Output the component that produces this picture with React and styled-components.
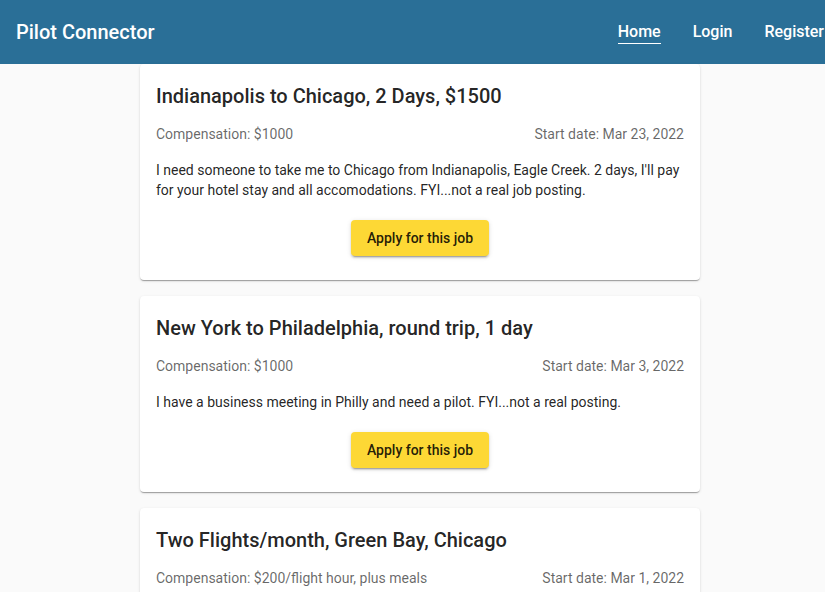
import React from 'react';
import styled, {createGlobalStyle} from 'styled-components';


/*==================== DATA ====================*/
const jobs = [
  {
    id: 1,
    title: 'Indianapolis to Chicago, 2 Days, $1500',
    compensation: '$1000',
    startDate: 'Mar 23, 2022',
    description: "I need someone to take me to Chicago from Indianapolis, Eagle Creek. 2 days, I'll pay for your hotel stay and all accomodations. FYI...not a real job posting.",
  },
  {
    id: 2,
    title: 'New York to Philadelphia, round trip, 1 day',
    compensation: '$1000',
    startDate: 'Mar 3, 2022',
    description: 'I have a business meeting in Philly and need a pilot. FYI...not a real posting.',
  },
  {
    id: 3,
    title: 'Two Flights/month, Green Bay, Chicago',
    compensation: '$200/flight hour, plus meals',
    startDate: 'Mar 1, 2022',
    description: 'Looking for a pilot to fly me between Green Bay and Chicago twice a month. FYI...not a real posting.',
  },
];


function JobCard({job}) {
  return (
    <Card>
      <JobTitle>{job.title}</JobTitle>
      <MetaRow>
        <span>Compensation: {job.compensation}</span>
        <span>Start date: {job.startDate}</span>
      </MetaRow>
      <Description>{job.description}</Description>
      <Actions>
        <ApplyButton>Apply for this job</ApplyButton>
      </Actions>
    </Card>
  );
}


function App() {
  return (
    <>
      <GlobalStyle />
      <Header>
        <Brand>Pilot Connector</Brand>
        <Nav>
          <NavLink $active>Home</NavLink>
          <NavLink>Login</NavLink>
          <NavLink>Register</NavLink>
        </Nav>
      </Header>
      <Main>
        {jobs.map(job => <JobCard key={job.id} job={job} />)}
      </Main>
    </>
  );
}


/*==================== EXPORTS ====================*/
export default App;


const GlobalStyle = createGlobalStyle`
  html, body {
    margin: 0;
    padding: 0;
    background: #fafafa;
    font-family: Roboto, "Liberation Sans", Arial, sans-serif;
    overflow: hidden;
    height: 592px;
  }
`;

const Header = styled.header`
  height: 64px;
  background: #2a6f97;
  color: #fff;
  display: flex;
  align-items: center;
  padding-left: 16px;
  width: 840px;
  box-sizing: border-box;
`;

const Brand = styled.div`
  font-size: 20px;
  font-weight: 500;
  flex: 1;
`;

const Nav = styled.nav`
  display: flex;
  gap: 32px;
  margin-right: 16px;
`;

const NavLink = styled.a`
  font-size: 16px;
  font-weight: 500;
  color: #fff;
  line-height: 20px;
  margin-top: 2px;
  padding-bottom: 1px;
  border-bottom: ${p => p.$active ? '1.5px solid #fff' : '1.5px solid transparent'};
  cursor: pointer;
`;

const Main = styled.main`
  display: flex;
  flex-direction: column;
  gap: 16px;
  width: 560px;
  margin-left: 140px;
`;

const Card = styled.div`
  background: #fff;
  border-radius: 4px;
  padding: 16px 16px 24px;
  box-shadow: 0 2px 1px -1px rgba(0,0,0,0.2), 0 1px 1px 0 rgba(0,0,0,0.14), 0 1px 3px 0 rgba(0,0,0,0.12);
`;

const JobTitle = styled.h2`
  margin: 0 0 12px;
  font-size: 20px;
  font-weight: 500;
  line-height: 32px;
  color: rgba(0,0,0,0.87);
`;

const MetaRow = styled.div`
  display: flex;
  justify-content: space-between;
  font-size: 14px;
  line-height: 20px;
  color: rgba(0,0,0,0.6);
  margin-bottom: 16px;
`;

const Description = styled.p`
  margin: 0 0 20px;
  font-size: 14px;
  line-height: 20px;
  color: rgba(0,0,0,0.87);
`;

const Actions = styled.div`
  display: flex;
  justify-content: center;
`;

const ApplyButton = styled.button`
  height: 36px;
  padding: 0 16px;
  border: none;
  border-radius: 4px;
  background: #fdd835;
  color: rgba(0,0,0,0.87);
  font-family: inherit;
  font-size: 14px;
  font-weight: 500;
  box-shadow: 0 3px 1px -2px rgba(0,0,0,0.2), 0 2px 2px 0 rgba(0,0,0,0.14), 0 1px 5px 0 rgba(0,0,0,0.12);
  cursor: pointer;
`;
